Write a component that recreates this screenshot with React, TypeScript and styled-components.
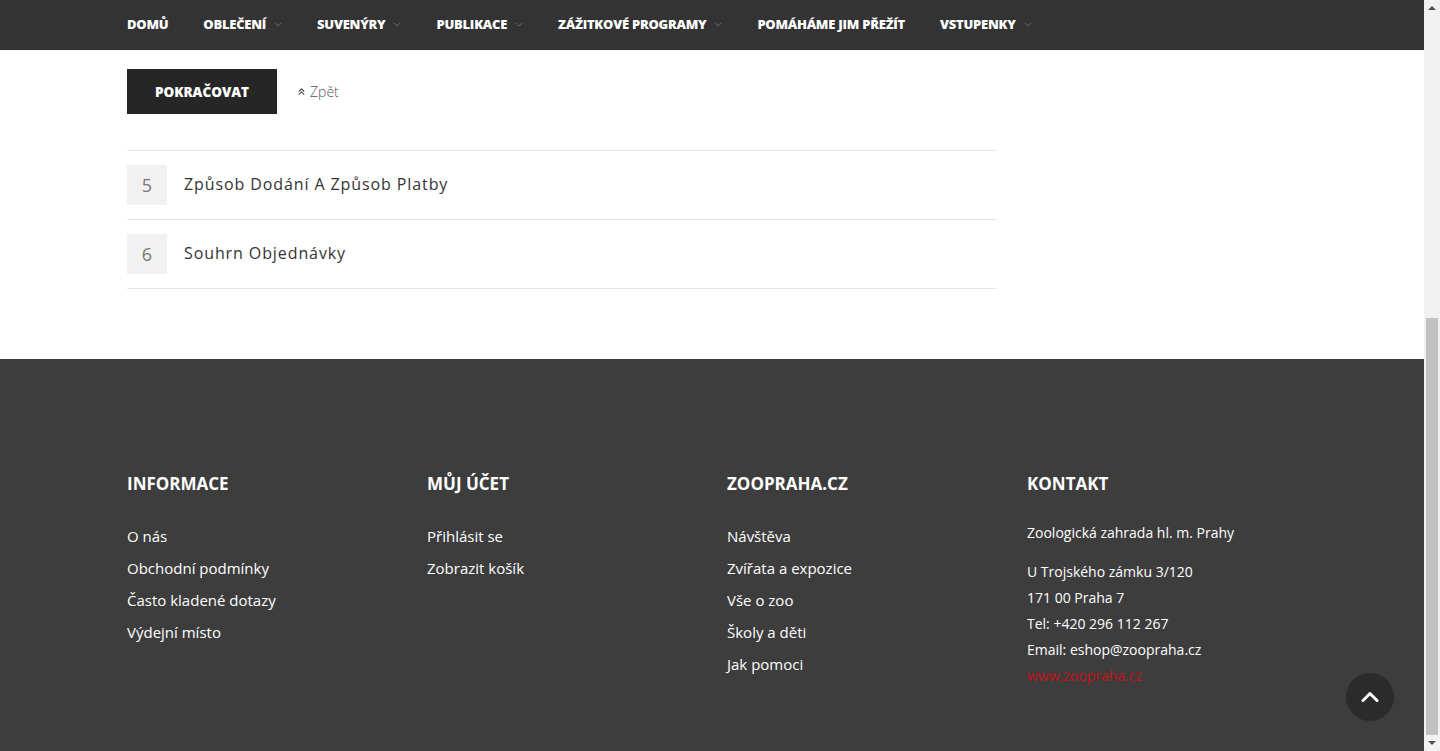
import React from "react"
import styled, { createGlobalStyle } from "styled-components"

const GlobalStyle = createGlobalStyle`
    html, body {
        margin: 0;
        padding: 0;
        height: 100%;
        overflow: hidden;
    }
    body {
        font-family: "Open Sans", "Liberation Sans", sans-serif;
        color: #333;
    }
    * {
        box-sizing: border-box;
    }
`

const menu = [
    { label: "Domů", sub: false },
    { label: "Oblečení", sub: true },
    { label: "Suvenýry", sub: true },
    { label: "Publikace", sub: true },
    { label: "Zážitkové programy", sub: true },
    { label: "Pomáháme jim přežít", sub: false },
    { label: "Vstupenky", sub: true },
]

const steps = [
    { num: 5, title: "Způsob Dodání A Způsob Platby" },
    { num: 6, title: "Souhrn Objednávky" },
]

const footerCols = [
    { title: "Informace", links: ["O nás", "Obchodní podmínky", "Často kladené dotazy", "Výdejní místo"] },
    { title: "Můj účet", links: ["Přihlásit se", "Zobrazit košík"] },
    { title: "Zoopraha.cz", links: ["Návštěva", "Zvířata a expozice", "Vše o zoo", "Školy a děti", "Jak pomoci"] },
]

export default function App() {
    return <Shell>
        <GlobalStyle />
        <Page>
            <NavBar>
                <Container>
                    <Menu>
                        {menu.map(m => <MenuItem key={m.label}>
                            {m.label}
                            {m.sub && <Caret viewBox="0 0 10 6"><path d="M1 1l4 4 4-4" /></Caret>}
                        </MenuItem>)}
                    </Menu>
                </Container>
            </NavBar>

            <Content>
                <Container>
                    <Checkout>
                        <Actions>
                            <PrimaryButton>Pokračovat</PrimaryButton>
                            <BackLink>
                                <svg width="9" height="9" viewBox="0 0 10 10" fill="none" stroke="#555" strokeWidth="1.3">
                                    <path d="M2 5l3-3 3 3M2 8.5l3-3 3 3" />
                                </svg>
                                Zpět
                            </BackLink>
                        </Actions>
                        <Steps>
                            {steps.map(s => <Step key={s.num}>
                                <StepNumber>{s.num}</StepNumber>
                                <StepTitle>{s.title}</StepTitle>
                            </Step>)}
                        </Steps>
                    </Checkout>
                </Container>
            </Content>

            <Footer>
                <FooterGrid>
                    {footerCols.map(col => <FooterCol key={col.title}>
                        <FooterTitle>{col.title}</FooterTitle>
                        <LinkList>
                            {col.links.map(l => <FooterLink key={l}>{l}</FooterLink>)}
                        </LinkList>
                    </FooterCol>)}
                    <FooterCol>
                        <FooterTitle>Kontakt</FooterTitle>
                        <Contact>
                            <ContactLine>Zoologická zahrada hl. m. Prahy</ContactLine>
                            <ContactBlock>
                                <ContactLine>U Trojského zámku 3/120</ContactLine>
                                <ContactLine>171 00 Praha 7</ContactLine>
                                <ContactLine>Tel: +420 296 112 267</ContactLine>
                                <ContactLine>Email: eshop@zoopraha.cz</ContactLine>
                                <ContactLine $red>www.zoopraha.cz</ContactLine>
                            </ContactBlock>
                        </Contact>
                    </FooterCol>
                </FooterGrid>
                <ToTop>
                    <svg width="18" height="12" viewBox="0 0 18 12" fill="none" stroke="#fff" strokeWidth="3" strokeLinecap="round" strokeLinejoin="round">
                        <path d="M2 9.5l7-7 7 7" />
                    </svg>
                </ToTop>
            </Footer>
        </Page>

        <Scrollbar>
            <ScrollArrow viewBox="0 0 8 4"><path d="M0 4L4 0 8 4z" /></ScrollArrow>
            <Track>
                <Thumb />
            </Track>
            <ScrollArrow viewBox="0 0 8 4"><path d="M0 0L4 4 8 0z" /></ScrollArrow>
        </Scrollbar>
    </Shell>
}

const Shell = styled.div`
    display: flex;
    width: 1440px;
    height: 751px;
    overflow: hidden;
`

const Page = styled.div`
    flex: 1;
    display: flex;
    flex-direction: column;
    position: relative;
    background: #fff;
`

const Container = styled.div`
    width: 1170px;
    margin: 0 auto;
`

const NavBar = styled.nav`
    height: 50px;
    background: #333;
    flex-shrink: 0;
`

const Menu = styled.ul`
    list-style: none;
    margin: 0;
    padding: 0 0 2px;
    height: 50px;
    display: flex;
    align-items: center;
    gap: 35px;
`

const MenuItem = styled.li`
    display: flex;
    align-items: center;
    gap: 8px;
    color: #fff;
    font-size: 13px;
    font-weight: 800;
    text-transform: uppercase;
    letter-spacing: -0.25px;
`

const Caret = styled.svg`
    width: 8px;
    height: 5px;
    fill: none;
    stroke: #777;
    stroke-width: 1;
`

const Content = styled.section`
    padding: 19px 0 70px;
`

const Checkout = styled.div`
    width: 870px;
`

const Actions = styled.div`
    display: flex;
    align-items: center;
    gap: 20px;
    margin-bottom: 36px;
`

const PrimaryButton = styled.button`
    width: 150px;
    height: 45px;
    border: 0;
    background: #262626;
    color: #fff;
    font-family: inherit;
    font-size: 13.5px;
    font-weight: 800;
    text-transform: uppercase;
    letter-spacing: 0;
`

const BackLink = styled.a`
    display: flex;
    align-items: center;
    gap: 4px;
    color: #555;
    font-size: 14px;
    font-weight: 300;
`

const Steps = styled.div`
    border-top: 1px solid #e5e5e5;
`

const Step = styled.div`
    height: 69px;
    display: flex;
    align-items: center;
    gap: 17px;
    border-bottom: 1px solid #e5e5e5;
`

const StepNumber = styled.span`
    width: 40px;
    height: 40px;
    display: flex;
    align-items: center;
    justify-content: center;
    background: #f1f1f1;
    color: #777;
    font-size: 18px;
`

const StepTitle = styled.span`
    font-size: 16px;
    font-weight: 500;
    color: #333;
    letter-spacing: 0.9px;
    margin-top: -2px;
`

const Footer = styled.footer`
    flex: 1;
    background: #3d3d3d;
    padding-top: 114px;
`

const FooterGrid = styled.div`
    width: 1200px;
    margin: 0 auto;
    padding: 0 15px;
    display: grid;
    grid-template-columns: repeat(4, 300px);
`

const FooterCol = styled.div`
    color: #fff;
`

const FooterTitle = styled.h4`
    margin: 0 0 25px;
    font-size: 17px;
    line-height: 22px;
    font-weight: 700;
    text-transform: uppercase;
    color: #fff;
`

const LinkList = styled.ul`
    list-style: none;
    margin: 0;
    padding: 0;
`

const FooterLink = styled.li`
    font-size: 15px;
    line-height: 32px;
    color: #fff;
`

const Contact = styled.div`
    font-size: 14px;
    line-height: 26px;
`

const ContactBlock = styled.div`
    margin-top: 13px;
`

const ContactLine = styled.div<{ $red?: boolean }>`
    color: ${p => p.$red ? "#c4121a" : "#fff"};
`

const ToTop = styled.button`
    position: absolute;
    right: 30px;
    bottom: 30px;
    width: 48px;
    height: 48px;
    border: 0;
    border-radius: 50%;
    background: #2b2b2b;
    display: flex;
    align-items: center;
    justify-content: center;
`

const Scrollbar = styled.div`
    width: 16px;
    background: #f1f1f1;
    display: flex;
    flex-direction: column;
    align-items: center;
`

const ScrollArrow = styled.svg`
    width: 8px;
    height: 4px;
    margin: 6px 0;
    fill: #505050;
`

const Track = styled.div`
    flex: 1;
    width: 100%;
    display: flex;
    flex-direction: column;
    justify-content: flex-end;
    padding: 0 2px;
`

const Thumb = styled.div`
    height: 417px;
    background: #c1c1c1;
`
